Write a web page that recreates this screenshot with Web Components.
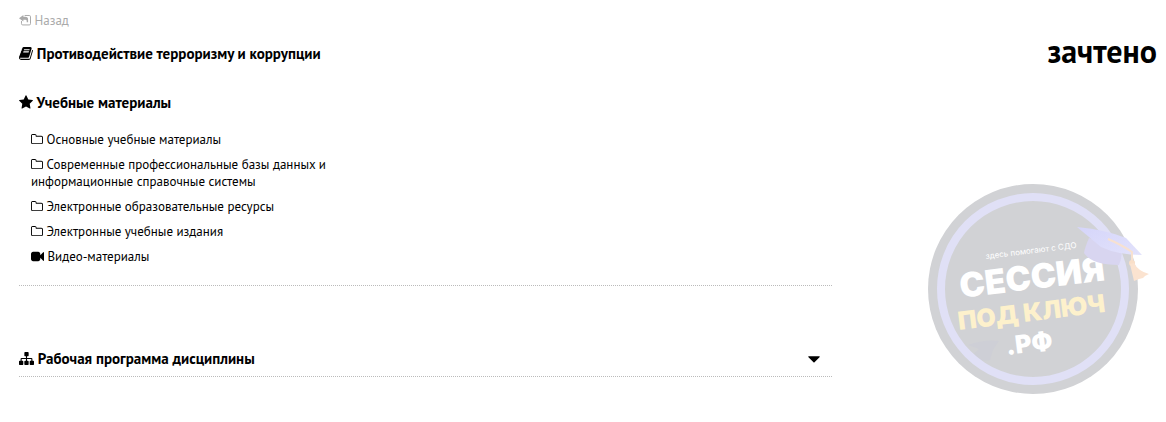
<!DOCTYPE html>
<html lang="ru">
<head>
<meta charset="utf-8">
<meta name="viewport" content="width=device-width, initial-scale=1">
<title>Противодействие терроризму и коррупции</title>
<style>
  body {
    margin: 0;
    background: #fff;
    color: #000;
    font: 13px/17px "PT Sans", "Open Sans", "Noto Sans", sans-serif;
  }
</style>
</head>
<body>
<course-page></course-page>

<script>
const icons = {
  back: '<path d="M0 600L620 130V400H900Q1290 400 1290 800V1180H1090V940Q1090 800 900 800H620V1070Z"/><path d="M800 210H1450Q1630 210 1630 390V1370Q1630 1550 1450 1550H530Q350 1550 350 1370V1000" fill="none" stroke="currentColor" stroke-width="140"/>',
  book: '<path d="M1703 478q40 57 18 129l-275 906q-19 64-76.5 107.5t-122.5 43.5h-923q-77 0-148.5-53.5t-99.5-131.5q-24-67-2-127 0-4 3-27t4-37q1-8-3-21.5t-3-19.5q2-11 8-21t16.5-23.5 16.5-23.5q23-38 45-91.5t30-91.5q3-10 .5-30t-.5-28q3-11 17-28t17-23q21-36 42-92t25-90q1-9-2.5-32t.5-28q4-13 22-30.5t22-22.5q19-26 42.5-84.5t27.5-96.5q1-8-3-25.5t-2-26.5q2-8 9-18t18-23 17-21q8-12 16.5-30.5t15-35 16-36 19.5-32 26.5-23.5 36-11.5 47.5 5.5l-1 3q38-9 51-9h761q74 0 114 56t18 130l-274 906q-36 119-71.5 153.5t-128.5 34.5h-869q-27 0-38 15-11 16-1 43 24 70 144 70h923q29 0 56-15.5t35-41.5l300-987q7-22 5-57 38 15 59 43zm-1064 2q-4 13 2 22.5t20 9.5h608q13 0 25.5-9.5t16.5-22.5l21-64q4-13-2-22.5t-20-9.5h-608q-13 0-25.5 9.5t-16.5 22.5zm-83 256q-4 13 2 22.5t20 9.5h608q13 0 25.5-9.5t16.5-22.5l21-64q4-13-2-22.5t-20-9.5h-608q-13 0-25.5 9.5t-16.5 22.5z"/>',
  star: '<path d="M1728 647q0 22-26 48l-363 354 86 500q1 7 1 20 0 21-10.5 35.5t-30.5 14.5q-19 0-40-12l-449-236-449 236q-22 12-40 12-21 0-31.5-14.5t-10.5-35.5q0-6 2-20l86-500-364-354q-25-27-25-48 0-37 56-46l502-73 225-455q19-41 49-41t49 41l225 455 502 73q56 9 56 46z"/>',
  folder: '<path d="M1600 1312v-704q0-40-28-68t-68-28h-704q-40 0-68-28t-28-68v-64q0-40-28-68t-68-28h-320q-40 0-68 28t-28 68v960q0 40 28 68t68 28h1216q40 0 68-28t28-68zm128-704v704q0 92-66 158t-158 66h-1216q-92 0-158-66t-66-158v-960q0-92 66-158t158-66h320q92 0 158 66t66 158v32h672q92 0 158 66t66 158z"/>',
  video: '<path d="M1792 352v1088q0 42-39 59-13 5-25 5-27 0-45-19l-403-403v166q0 119-84.5 203.5t-203.5 84.5h-704q-119 0-203.5-84.5t-84.5-203.5v-704q0-119 84.5-203.5t203.5-84.5h704q119 0 203.5 84.5t84.5 203.5v165l403-402q18-19 45-19 12 0 25 5 39 17 39 59z"/>',
  sitemap: '<path d="M1792 1248v320q0 40-28 68t-68 28h-320q-40 0-68-28t-28-68v-320q0-40 28-68t68-28h96v-192h-512v192h96q40 0 68 28t28 68v320q0 40-28 68t-68 28h-320q-40 0-68-28t-28-68v-320q0-40 28-68t68-28h96v-192h-512v192h96q40 0 68 28t28 68v320q0 40-28 68t-68 28h-320q-40 0-68-28t-28-68v-320q0-40 28-68t68-28h96v-192q0-52 38-90t90-38h512v-192h-96q-40 0-68-28t-28-68v-320q0-40 28-68t68-28h320q40 0 68 28t28 68v320q0 40-28 68t-68 28h-96v192h512q52 0 90 38t38 90v192h96q40 0 68 28t28 68z"/>',
  caret: '<path d="M1408 704q0 26-19 45l-448 448q-19 19-45 19t-45-19l-448-448q-19-19-19-45t19-45 45-19h896q26 0 45 19t19 45z"/>'
};

// icons whose glyph fills the box from its left edge are drawn without side bearing
const viewBoxes = {
  back: '0 0 1700 1700',
  book: '64 0 1664 1792',
  star: '64 0 1664 1792',
  folder: '64 0 1664 1792'
};

function render(host, html) {
  const template = document.createElement('template');
  template.innerHTML = html;
  host.attachShadow({ mode: 'open' });
  host.shadowRoot.appendChild(template.content.cloneNode(true));
}

class UiIcon extends HTMLElement {
  constructor() {
    super();
    const name = this.getAttribute('name');
    render(this, `
      <style>
        :host { display: inline-block; width: 12px; height: 12px; vertical-align: -1px; }
        svg { display: block; width: 100%; height: 100%; fill: currentColor; }
      </style>
      <svg viewBox="${viewBoxes[name] || '0 0 1792 1792'}" aria-hidden="true">${icons[name]}</svg>
    `);
  }
}

class BackLink extends HTMLElement {
  constructor() {
    super();
    render(this, `
      <style>
        :host { display: block; }
        a { color: #aaa; text-decoration: none; }
      </style>
      <a href="#back"><ui-icon name="back"></ui-icon> <slot></slot></a>
    `);
  }
}

class SectionTitle extends HTMLElement {
  constructor() {
    super();
    render(this, `
      <style>
        :host { display: block; }
        h2 { margin: 0; font-size: 15px; line-height: 20px; font-weight: 700; }
        ui-icon { width: 14px; height: 15px; vertical-align: -2px; }
        ui-icon[name="sitemap"] { width: 15px; }
      </style>
      <h2><ui-icon name="${this.getAttribute('icon')}"></ui-icon> <slot></slot></h2>
    `);
  }
}

class MaterialLink extends HTMLElement {
  constructor() {
    super();
    render(this, `
      <style>
        :host { display: block; }
        a { color: inherit; text-decoration: none; }
        ui-icon { height: 13px; vertical-align: -2px; }
        ui-icon[name="video"] { width: 13px; }
      </style>
      <a href="#material"><ui-icon name="${this.getAttribute('icon') || 'folder'}"></ui-icon> <slot></slot></a>
    `);
  }
}

class CollapseBar extends HTMLElement {
  constructor() {
    super();
    render(this, `
      <style>
        :host { display: block; border-bottom: 1px dotted #bbb; }
        button {
          display: flex;
          justify-content: space-between;
          align-items: center;
          width: 100%;
          padding: 0 8px 7px 0;
          border: 0;
          background: none;
          color: inherit;
          font: inherit;
          text-align: left;
          cursor: pointer;
        }
        button > ui-icon { width: 20px; height: 20px; }
      </style>
      <button type="button" aria-expanded="false">
        <section-title icon="${this.getAttribute('icon')}"><slot></slot></section-title>
        <ui-icon name="caret"></ui-icon>
      </button>
    `);
  }
}

class SessionBadge extends HTMLElement {
  constructor() {
    super();
    render(this, `
      <style>
        :host { display: block; width: 224px; }
        svg { display: block; width: 100%; }
        text { font-family: Inter, "Open Sans", sans-serif; font-weight: 900; fill: #fff; }
        .small { font-size: 8px; font-weight: 400; }
        .large { font-size: 34px; }
        .medium { font-size: 25px; }
        .yellow { fill: #fdf1cc; }
      </style>
      <svg viewBox="0 0 224 216">
        <defs>
          <linearGradient id="cap" x1="0" y1="0" x2="1" y2="1">
            <stop offset="0" stop-color="#d5d5fa"/>
            <stop offset="1" stop-color="#e2e2fb"/>
          </linearGradient>
        </defs>
        <circle cx="107" cy="107" r="105" fill="#d1d2d5"/>
        <path d="M42 163Q58 157 73 159L67 168L64 178Q54 180 45 174L53 167Z" fill="#cecfd6"/>
        <circle cx="107" cy="107" r="92" fill="none" stroke="#e0e0f6" stroke-width="8"/>
        <text class="small" transform="translate(60 77) rotate(-7)">здесь помогают с СДО</text>
        <text class="large" transform="translate(35 116) rotate(-7)">СЕССИЯ</text>
        <text class="medium yellow" transform="translate(33 148) rotate(-7)">ПОД КЛЮЧ</text>
        <text class="medium" transform="translate(81 173) rotate(-7)">.РФ</text>
        <path d="M163 56Q159 65 158 71Q166 83 193 83Q196 77 196 66Z" fill="#d8d5f0"/>
        <path d="M151 45Q181 48 200 56L216 73Q192 73 175 65Z" fill="url(#cap)"/>
        <path d="M182 57Q196 63 206 70V79" fill="none" stroke="#f7e1d0" stroke-width="2"/>
        <circle cx="206" cy="81" r="3" fill="#f9dfc8"/>
        <path d="M204 82L208 81Q212 89 223 92L219 94L217 96L213 97L208 99Z" fill="#fbe3d0"/>
      </svg>
    `);
  }
}

class CoursePage extends HTMLElement {
  constructor() {
    super();
    render(this, `
      <style>
        :host { display: block; padding: 12px 9px 24px 19px; }
        .course { display: grid; grid-template-columns: 5fr 2fr; margin-top: 6px; }
        main { padding-top: 9px; }
        .materials { margin-top: 29px; padding-bottom: 20px; border-bottom: 1px dotted #bbb; }
        ul {
          display: flex;
          flex-direction: column;
          gap: 8px;
          max-width: 300px;
          margin: 18px 0 0;
          padding: 0 12px;
          list-style: none;
        }
        collapse-bar { margin-top: 63px; }
        aside { display: flex; flex-direction: column; align-items: flex-end; gap: 115px; }
        strong { font-size: 32px; line-height: 32px; }
        session-badge { margin-right: 7px; }
      </style>
      <back-link>Назад</back-link>
      <div class="course">
        <main>
          <section-title icon="book">Противодействие терроризму и коррупции</section-title>
          <section class="materials">
            <section-title icon="star">Учебные материалы</section-title>
            <ul>
              <li><material-link>Основные учебные материалы</material-link></li>
              <li><material-link>Современные профессиональные базы данных и информационные справочные системы</material-link></li>
              <li><material-link>Электронные образовательные ресурсы</material-link></li>
              <li><material-link>Электронные учебные издания</material-link></li>
              <li><material-link icon="video">Видео-материалы</material-link></li>
            </ul>
          </section>
          <collapse-bar icon="sitemap">Рабочая программа дисциплины</collapse-bar>
        </main>
        <aside>
          <strong>зачтено</strong>
          <session-badge></session-badge>
        </aside>
      </div>
    `);
  }
}

customElements.define('ui-icon', UiIcon);
customElements.define('back-link', BackLink);
customElements.define('section-title', SectionTitle);
customElements.define('material-link', MaterialLink);
customElements.define('collapse-bar', CollapseBar);
customElements.define('session-badge', SessionBadge);
customElements.define('course-page', CoursePage);
</script>
</body>
</html>
